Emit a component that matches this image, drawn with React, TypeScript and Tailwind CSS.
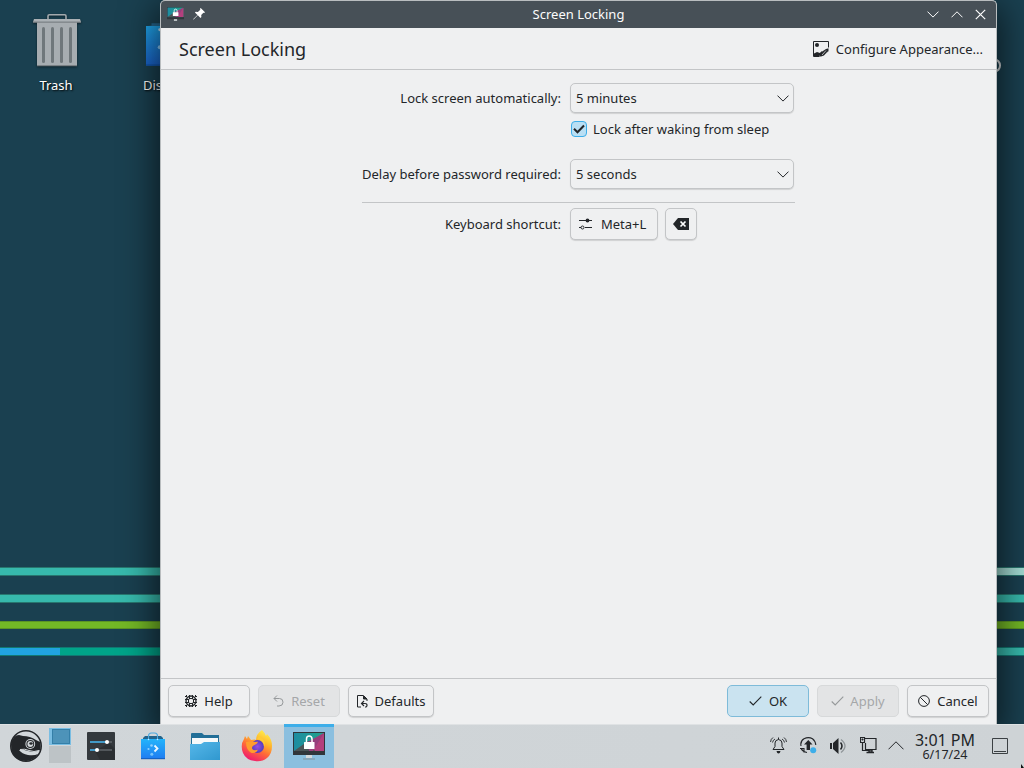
import type { ReactNode } from "react";

const ink = "#232629";

function Trash() {
  return (
    <svg width="48" height="54" viewBox="0 0 48 54" className="drop-shadow-[0_1px_1px_rgba(0,0,0,0.5)]">
      <path d="M15 6V3q0-1.300 1.300-1.300h15.400q1.300 0 1.300 1.300v3" fill="none" stroke="#a3a9ad" strokeWidth="1.600" />
      <rect x="4" y="8" width="40" height="45" fill="#a7adb1" />
      <rect x="4" y="52" width="40" height="1.200" fill="#7b8185" />
      <path d="M1 6h46l1 3H0z" fill="#abb1b5" />
      <rect x="0" y="8.500" width="48" height="1.300" fill="#7d8387" />
      {[9, 18, 27, 36].map((x) => (
        <rect key={x} x={x} y="14" width="3" height="36" rx="1.5" fill="#6f777b" />
      ))}
    </svg>
  );
}

function Discover({ size, light }: { size: number; light?: boolean }) {
  return (
    <svg width={size} height={(size * 28) / 24} viewBox="0 0 24 28">
      <defs>
        <linearGradient id={light ? "dl" : "dd"} x1="0" y1="0" x2="0" y2="1">
          <stop offset="0" stopColor={light ? "#23b4fb" : "#1fa5ea"} />
          <stop offset="1" stopColor={light ? "#1f7cf1" : "#1a63cc"} />
        </linearGradient>
      </defs>
      <path d={light ? "M2 8V6l2-2h16l2 2v2z" : "M1 8V5.500l2-.3V4h17l2 2v2z"} fill="#24658c" />
      {light && <path d="M7.500 7V4q0-3 3-3h3q3 0 3 3v3" fill="none" stroke="#4da9df" strokeWidth="1.100" />}
      <path d={light ? "M0 7h24v20H0z" : "M0 5.500h24v21.500H0z"} fill={light ? "url(#dl)" : "url(#dd)"} />
      <path d="M0 26.300h24v.9H0z" fill="#1257b0" />
      <circle cx="7.500" cy="7.500" r=".8" fill="#c7e9ff" />
      <circle cx="16.500" cy="7.500" r=".8" fill="#c7e9ff" />
      <path d="m13.500 13.500 3 3-3 3" fill="none" stroke="#eef8ff" strokeWidth="1.800" />
      <circle cx="10.500" cy="13.500" r="1.300" fill="#8fd0fd" />
      <circle cx="7.500" cy="17" r="1.100" fill="#8fd0fd" />
      <circle cx="10.800" cy="22.300" r="1.500" fill="#75c3fc" />
    </svg>
  );
}

function LockMonitor({ size, id }: { size: number; id: string }) {
  return (
    <svg width={size} height={(size * 28) / 32} viewBox="0 0 32 28">
      <defs>
        <linearGradient id={id} x1="0" y1="0" x2="1" y2="0">
          <stop offset="0" stopColor="#1d8ca2" />
          <stop offset="1" stopColor="#22a38b" />
        </linearGradient>
      </defs>
      <rect width="32" height="23" fill="#31363b" />
      <rect x="1" y="1" width="30" height="18" fill={`url(#${id})`} />
      <path d="M1 19 15 9l9 10z" fill="#4b5558" />
      <path d="M31 1v18h-9L15 10z" fill="#b3407d" />
      <path d="M31 1 20 19h-4l-1-9z" fill="#963f7c" />
      <rect x="13" y="23" width="6" height="3" fill="#d5d9dc" />
      <rect x="10" y="26.500" width="12" height="1" fill="#859299" />
      <path d="M13.500 11V7q0-3 2.700-3T19 7v4" fill="none" stroke="#fff" strokeWidth="1.500" />
      <rect x="11" y="10" width="10.500" height="7" rx=".5" fill="#fff" />
    </svg>
  );
}

function Chevron({ up, w = 12, color = ink }: { up?: boolean; w?: number; color?: string }) {
  return (
    <svg width={w} height={w / 2 + 1} viewBox={`0 0 ${w} ${w / 2 + 1}`}>
      <path
        d={up ? `M.5 ${w / 2 + 0.3} ${w / 2} .8l${w / 2 - 0.5} ${w / 2 - 0.5}` : `M.5 .6 ${w / 2} ${w / 2 + 0.1}l${w / 2 - 0.5} -${w / 2 - 0.5}`}
        fill="none"
        stroke={color}
        strokeWidth="1"
      />
    </svg>
  );
}

function Check({ color = ink }: { color?: string }) {
  return (
    <svg width="13" height="12" viewBox="0 0 13 12">
      <path d="M.7 6.500 4.200 10 12.300 1.700" fill="none" stroke={color} strokeWidth="1.100" />
    </svg>
  );
}

function Btn({ children, className }: { children: ReactNode; className: string }) {
  return (
    <button className={`flex h-8 items-center rounded-[5px] border whitespace-nowrap ${className}`}>
      {children}
    </button>
  );
}

const normal = "border-[#c3c5c7] bg-[#eff0f1] shadow-[0_1px_1px_rgba(0,0,0,0.13)]";
const disabled = "border-[#d7d9da] bg-[#e3e4e5] text-[#a5a7a9]";

function Select({ value }: { value: string }) {
  return (
    <div className="flex h-[30px] w-[224px] items-center justify-between rounded-[5px] border border-[#c3c5c7] bg-[#eff0f1] pr-[4px] pl-[5px] shadow-[0_1px_1px_rgba(0,0,0,0.13)]">
      <span>{value}</span>
      <Chevron />
    </div>
  );
}

function TitleBar() {
  return (
    <header className="flex h-[27px] shrink-0 items-center bg-[#475057] px-[6px] pb-px text-[#fcfcfc]">
      <div className="flex w-[84px] items-center gap-[9px]">
        <LockMonitor size={17} id="title-monitor" />
        <svg width="12" height="12" viewBox="0 0 12 12" fill="#fff">
          <path d="M7.700 0 12 4.200l-.8.800-.8-.3-2.200 2.400.2 2-.9.900-2.700-2.700L.6 11.500l-.4.100.1-.5L4.500 7.100 1.900 4.500l.9-.8 2.100.2L7.300 1.700 7 .8z" />
        </svg>
      </div>
      <h1 className="flex-1 text-center">Screen Locking</h1>
      <div className="flex w-[84px] items-center justify-end gap-[12px] pr-[4px]">
        <Chevron color="#fcfcfc" />
        <Chevron up color="#fcfcfc" />
        <svg width="11" height="11" viewBox="0 0 11 11">
          <path d="m.8.8 9.400 9.400m0-9.400L.8 10.200" stroke="#fcfcfc" strokeWidth="1.200" />
        </svg>
      </div>
    </header>
  );
}

function SettingsWindow() {
  return (
    <section className="absolute top-0 left-[160px] flex h-[724px] w-[837px] flex-col overflow-hidden rounded-t-[5px] border border-b-0 border-[#b9bdbf] bg-[#eff0f1] shadow-[0_10px_34px_5px_rgba(0,0,0,0.6)]">
      <TitleBar />
      <div className="flex h-[42px] shrink-0 items-center justify-between border-b border-[#c3c5c7] pr-[13px] pl-[18px]">
        <h2 className="pt-px text-[18px] leading-none">Screen Locking</h2>
        <div className="flex items-center gap-[7px]">
          <svg width="16" height="16" viewBox="0 0 16 16">
            <path d="M.5.500h15v15H.5z" fill="none" stroke={ink} />
            <circle cx="4" cy="4" r="2" fill={ink} />
            <path d="M1 15v-2.500L4 11l3 1 2-2v5z" fill={ink} />
            <path d="M14.800 6.500H16V16H6.500v-1.500L11 13z" fill="#eff0f1" />
            <path d="m6.500 15.500.5-3.500 6-4 2.500-.7v3L11 14.500l-3 1z" fill={ink} />
            <path d="m9 14 4-4.500M11.500 14.500 15 10.500" stroke="#eff0f1" strokeWidth=".7" />
          </svg>
          <span>Configure Appearance...</span>
        </div>
      </div>
      <div className="flex-1 pt-[13px] pl-[201px]">
        <div className="grid w-[433px] grid-cols-[199px_224px] items-center gap-x-[9px]">
          <span className="text-right whitespace-nowrap">Lock screen automatically:</span>
          <Select value="5 minutes" />
          <label className="col-start-2 mt-[8px] ml-px flex h-4 items-center gap-[6px]">
            <span className="flex size-4 items-center justify-center rounded-[4px] border border-[#3daee9] bg-[#b9dff4]">
              <svg width="12" height="10" viewBox="0 0 12 10">
                <path d="m1 4.700 3.500 3.500L11 1.500" fill="none" stroke={ink} strokeWidth="2" />
              </svg>
            </span>
            <span className="whitespace-nowrap">Lock after waking from sleep</span>
          </label>
          <span className="mt-[22px] text-right whitespace-nowrap">Delay before password required:</span>
          <div className="mt-[22px]">
            <Select value="5 seconds" />
          </div>
          <hr className="col-span-2 mt-[13px] mb-[5px] -mr-px border-[#c3c5c7]" />
          <span className="text-right whitespace-nowrap">Keyboard shortcut:</span>
          <div className="flex gap-[7px]">
            <Btn className={`w-[88px] gap-[9px] pl-[8px] ${normal}`}>
              <svg width="13" height="12" viewBox="0 0 13 12">
                <path d="M0 2.500h13M0 9.500h2m4 0h7" stroke={ink} />
                <circle cx="8.500" cy="2.500" r="1.900" fill={ink} />
                <circle cx="3.500" cy="9.500" r="1.500" fill="none" stroke={ink} />
              </svg>
              Meta+L
            </Btn>
            <Btn className={`w-8 justify-center ${normal}`}>
              <svg width="16" height="12" viewBox="0 0 16 12">
                <path d="M5 0h11v12H5L0 6z" fill={ink} />
                <path d="m7.500 3.500 5 5m0-5-5 5" stroke="#fff" strokeWidth="1.700" />
              </svg>
            </Btn>
          </div>
        </div>
      </div>
      <footer className="flex h-[46px] shrink-0 items-start gap-[8px] border-t border-[#c3c5c7] px-[7px] pt-[6px]">
        <Btn className={`w-[82px] justify-center gap-[7px] ${normal}`}>
          <svg width="12" height="12" viewBox="0 0 12 12" fill="none" stroke={ink}>
            <circle cx="6" cy="6" r="5" strokeWidth="1.300" />
            <rect x="3.500" y="3.500" width="5" height="5" rx="1.500" />
            <path d="M4.500 0v4m3-4v4M4.500 8v4m3-4v4M0 4.500h4m-4 3h4M8 4.500h4m-4 3h4" />
            <path d="M0 1.500h2M1.500 0v2M10 1.500h2M10.500 0v2M0 10.500h2m-.5-.5v2m8.500-1.500h2m-1.500-.5v2" />
          </svg>
          Help
        </Btn>
        <Btn className={`w-[82px] justify-center gap-[7px] ${disabled}`}>
          <svg width="11" height="12" viewBox="0 0 11 12" fill="none" stroke="#96999b">
            <path d="M4 .5 1 3.500l3 3M1 3.500h5.500q3.500 0 3.500 3.700T6 11H4" />
          </svg>
          Reset
        </Btn>
        <Btn className={`w-[86px] justify-center gap-[7px] ${normal}`}>
          <svg width="11" height="13" viewBox="0 0 11 13" fill="none" stroke={ink}>
            <path d="M4 12H.5V.5h6l3.500 3.500v2" />
            <path d="M6.500 1v3H10" fill={ink} />
            <path d="m7 6-2.500 2.500L7 11M5 8.500h3q2 0 2 1.800T8 12" strokeWidth="1.200" />
          </svg>
          Defaults
        </Btn>
        <div className="flex-1" />
        <Btn className="w-[82px] justify-center gap-[7px] border-[#7ebbd9] bg-[#cae3f0]">
          <Check />
          OK
        </Btn>
        <Btn className={`w-[82px] justify-center gap-[6px] ${disabled}`}>
          <Check color="#96999b" />
          Apply
        </Btn>
        <Btn className={`w-[82px] justify-center gap-[7px] ${normal}`}>
          <svg width="12" height="12" viewBox="0 0 12 12" fill="none" stroke={ink}>
            <circle cx="6" cy="6" r="5.400" />
            <path d="m2.200 2.200 7.600 7.600" />
          </svg>
          Cancel
        </Btn>
      </footer>
    </section>
  );
}

function Stripes() {
  return (
    <div className="flex h-[656px] flex-col justify-end gap-[18px]">
      <div className="h-[9px] border-y border-[#28776f] bg-linear-to-r from-[#37b9ac] from-90% to-[#a4dcd4] to-98%" />
      <div className="h-[9px] border-y border-[#28776f] bg-[#37b9ac]" />
      <div className="h-[8px] border-y border-[#5c9425] bg-[#73b826]" />
      <div className="flex h-[9px] border-y border-[#117872]">
        <div className="w-[60px] bg-[#21a3e0]" />
        <div className="flex-1 bg-linear-to-r from-[#00a489] from-50% to-[#37b9ac] to-95%" />
      </div>
    </div>
  );
}

function Taskbar() {
  return (
    <footer className="relative flex h-[44px] items-stretch border-t border-[#dfe2e4] bg-linear-to-r from-[#d1d6d9] to-[#ced3d6]">
      <div className="flex w-[49px] items-center pb-px pl-[10px]">
        <svg width="32" height="32" viewBox="0 0 32 32">
          <circle cx="16" cy="16" r="15.200" fill="#d2d7da" stroke={ink} strokeWidth="1.600" />
          <path d="M1 14Q3 5 9 5l4 1q7 0 13 4l4 2q1 5 0 8-6 3-12 1-6-2-9-1 3 4 9 5 6 1 10-1-4 7-12 7-9 0-13-7-2-4-2-10" fill={ink} />
          <circle cx="20.300" cy="14" r="4.900" fill="#d2d7da" />
          <circle cx="20.300" cy="14" r="3.900" fill={ink} />
          <circle cx="20.300" cy="14" r="2.900" fill="#d2d7da" />
          <ellipse cx="21" cy="13.500" rx="1.700" ry="1.200" fill={ink} />
          <path d="M10 19.500q5-1 9 1 5 2 10 0" fill="none" stroke="#d2d7da" strokeWidth="1" />
        </svg>
      </div>
      <div className="flex w-[22px] flex-col pt-[3px]">
        <div className="h-[17px] border border-l-[3px] border-[#79bde2] bg-[#4d93b9]">
          <div className="h-[15px] border border-[#347fa8]" />
        </div>
        <div className="mt-px h-[17px] bg-[#bdc3c6]" />
      </div>
      <div className="flex flex-1 items-center pb-px pl-[16px]">
        <svg width="28" height="28" viewBox="0 0 28 28">
          <rect width="28" height="28" rx="1" fill="#34393d" />
          <path d="m22 11 6 6v11H13L8 19z" fill="#2b2f32" />
          <path d="M3 10h22M3 18h22" stroke="#606569" strokeWidth="1.500" />
          <path d="M3 10h16M3 18h7" stroke="#3daee9" strokeWidth="1.500" />
          <circle cx="20" cy="10" r="2" fill="#fff" />
          <circle cx="10" cy="18" r="2" fill="#fff" />
        </svg>
        <div className="ml-[26px]">
          <Discover size={24} light />
        </div>
        <svg className="ml-[25px]" width="30" height="27" viewBox="0 0 30 27">
          <defs>
            <linearGradient id="folder" x1="0" y1="0" x2="1" y2="1">
              <stop offset="0" stopColor="#56b7e9" />
              <stop offset="1" stopColor="#3098cf" />
            </linearGradient>
          </defs>
          <path d="M1 1q0-1 1-1h10l2 2h15v14H1z" fill="#236f97" />
          <path d="M2 5h26v10H2z" fill="#f7f9fa" />
          <path d="M0 11h11l3-2h16v18H0z" fill="url(#folder)" />
        </svg>
        <svg className="ml-[21px]" width="32" height="32" viewBox="0 0 32 32">
          <defs>
            <linearGradient id="fire" x1=".8" y1="0" x2=".3" y2="1">
              <stop offset="0" stopColor="#fff44f" />
              <stop offset=".35" stopColor="#ffb72c" />
              <stop offset=".62" stopColor="#ff6c38" />
              <stop offset="1" stopColor="#ef1671" />
            </linearGradient>
            <radialGradient id="globe">
              <stop offset="0" stopColor="#9650e0" />
              <stop offset="1" stopColor="#523cc0" />
            </radialGradient>
          </defs>
          <path d="M21 0q3 3 4 6l1-2q5 5 5 12 0 8-5 12-5 4-12 3-9-1-12-8-3-8 1-14l1-3 2 3 1-3 3 4q4-1 5 0 0-6 6-10" fill="url(#fire)" />
          <circle cx="16.500" cy="16.500" r="6.500" fill="url(#globe)" />
          <path d="M5 12q4-1 6 0l6-.3q-.5 2-3 3-3 1-3 3 0 2 3 2.500l3-.5q-2 4-7 3-5-3-5-10.700" fill="#ff9d2d" />
          <path d="M16 9q7 1 7 8 2-4-1-8l-4-3z" fill="#ffca36" />
        </svg>
        <div className="-mt-px ml-[11px] flex h-[44px] w-[50px] items-center justify-center self-start border-t-[3px] border-[#3daee9] bg-[#8bbfdf] pb-[3px]">
          <LockMonitor size={32} id="task-monitor" />
        </div>
      </div>
      <div className="flex items-center pr-[16px] pb-[2px]">
        <svg width="17" height="17" viewBox="0 0 17 17" fill="none" stroke={ink}>
          <path d="M3 12.500h11l-2-3V6Q12 3 8.500 2.500 5 3 5 6v3.500zM8.500.5v2" />
          <path d="M3 .5Q.8 2 .5 5M5 2Q3 3 2.500 5.500M14 .5Q16.200 2 16.500 5M12 2q2 1 2.500 3.500" strokeWidth=".9" />
          <path d="M6.500 14h4q-.5 2.500-2 2.500T6.500 14" fill={ink} stroke="none" />
        </svg>
        <svg className="ml-[13px]" width="17" height="17" viewBox="0 0 17 17" fill="none" stroke={ink}>
          <path d="M1 9Q0 4 4 1.700q4.500-2.200 8.500 0Q15.500 4 15.800 8M0 11.500h4v4M1 11.500q2 3.500 6 4" strokeWidth="1.100" />
          <path d="m8.300 3 4.200 4.500H10V13H6.600V7.500H4z" fill={ink} stroke="none" />
          <circle cx="13.200" cy="13.200" r="3" fill="#3daee9" stroke="none" />
        </svg>
        <svg className="ml-[13px]" width="17" height="16" viewBox="0 0 17 16" fill="none">
          <path d="M0 5h2v6H0zm3 0 5.500-5v16L3 11z" fill={ink} />
          <path d="M10.500 4.500q3 3.500 0 7" stroke={ink} strokeWidth="1.500" />
          <path d="M11 1.500q8 6.500 0 13" stroke="#8e9497" strokeWidth="1.300" />
        </svg>
        <svg className="ml-[13px]" width="17" height="17" viewBox="0 0 17 17" fill="none" stroke={ink}>
          <path d="M.5.500h4v5h-4zM2.500 6v7.500H9M5 1.500h11v11H5.500V6" strokeWidth="1.200" />
          <path d="M9 13h3v2H9zM6.500 15.500h7.500" strokeWidth="1.400" />
          <path d="M2 2h1v1H2z" fill={ink} />
        </svg>
        <div className="ml-[11px]">
          <Chevron up w={16} />
        </div>
        <div className="ml-[11px] flex w-[60px] flex-col items-center pt-px whitespace-nowrap">
          <span className="text-[16px] leading-[16px]">3:01 PM</span>
          <span className="text-[12.500px] leading-[13px]">6/17/24</span>
        </div>
        <svg className="ml-[17px]" width="16" height="16" viewBox="0 0 16 16" fill="none" stroke="#3b4043">
          <path d="M.5.500h15v15H.5zM2 13.500h12" />
        </svg>
      </div>
      <svg className="absolute right-0 bottom-0" width="3" height="4" viewBox="0 0 3 4">
        <path d="M0 0v4h3z" fill="#111" />
      </svg>
    </footer>
  );
}

export default function App() {
  return (
    <main className="flex h-[768px] w-[1024px] flex-col overflow-hidden bg-[#1a4050] font-['Noto_Sans',sans-serif] text-[13px] leading-[18px] text-[#232629]">
      <div className="relative h-[724px] shrink-0 overflow-hidden">
        <Stripes />
        <div className="absolute top-[13px] left-[33px] flex w-[48px] flex-col items-center gap-[9px] text-white">
          <Trash />
          <span className="mr-[2px] [text-shadow:1px_1px_2px_#000]">Trash</span>
        </div>
        <div className="absolute top-[16px] left-[143px] flex flex-col gap-[8px] text-white">
          <div className="ml-[3px] h-[52px]">
            <Discover size={44} />
          </div>
          <span className="[text-shadow:1px_1px_2px_#000]">Discover</span>
        </div>
        <svg className="absolute top-[58px] left-[986px]" width="16" height="16" viewBox="0 0 16 16">
          <ellipse cx="8.500" cy="7.500" rx="5.500" ry="6" fill="none" stroke="#d5dadc" strokeWidth="2" />
        </svg>
        <SettingsWindow />
      </div>
      <Taskbar />
    </main>
  );
}
